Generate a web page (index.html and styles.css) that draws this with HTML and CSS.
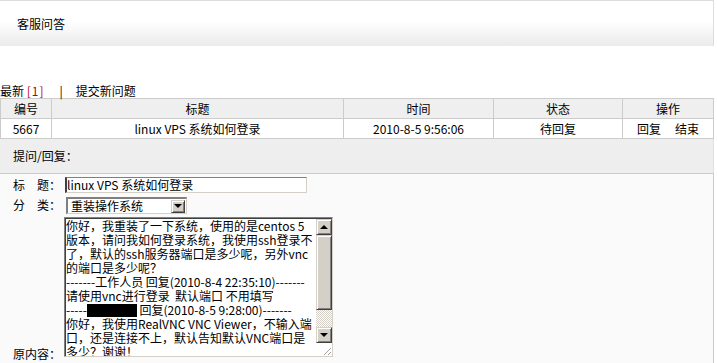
FILE: index.html
```html
<!DOCTYPE html>
<html>
<head>
<meta charset="utf-8">
<link rel="stylesheet" href="styles.css">
</head>
<body>
<div class="page">
  <div class="header"><span class="header-title">客服问答</span></div>
  <div class="tabs">最新 <span class="count">[1]</span><span class="sep">|</span>提交新问题</div>
  <table class="list">
    <tr class="head">
      <td class="c1">编号</td><td class="c2">标题</td><td class="c3">时间</td><td class="c4">状态</td><td class="c5">操作</td>
    </tr>
    <tr>
      <td>5667</td><td>linux VPS 系统如何登录</td><td>2010-8-5 9:56:06</td><td>待回复</td><td>回复<span class="gap"></span>结束</td>
    </tr>
  </table>
  <div class="panel">提问/回复：</div>
  <div class="form">
    <div class="label">标　题：</div>
    <div class="field"><div class="input">linux VPS 系统如何登录</div></div>
    <div class="label">分　类：</div>
    <div class="field"><div class="select"><span class="sel-text">重装操作系统</span><span class="sel-btn"><span class="arrow-down"></span></span></div></div>
    <div class="label bottom">原内容：</div>
    <div class="field">
      <div class="textarea">
        <div class="ta-text">你好，我重装了一下系统，使用的是centos 5
版本，请问我如何登录系统，我使用ssh登录不
了，默认的ssh服务器端口是多少呢，另外vnc
的端口是多少呢？
-------工作人员 回复(2010-8-4 22:35:10)-------
请使用vnc进行登录  默认端口 不用填写
-----<span class="redact"></span> 回复(2010-8-5 9:28:00)-------
你好，我使用RealVNC VNC Viewer，不输入端
口，还是连接不上，默认告知默认VNC端口是
多少？谢谢！</div>
        <div class="sb-col">
          <div class="sb">
            <div class="sb-btn"><span class="arrow-up"></span></div>
            <div class="sb-thumb"></div>
            <div class="sb-track"></div>
            <div class="sb-btn"><span class="arrow-down"></span></div>
          </div>
          <div class="corner">
            <svg width="12" height="12" viewBox="0 0 12 12"><path d="M11 4 L4 11 M11 8 L8 11" stroke="#a0a0a0" stroke-width="1" fill="none"/></svg>
          </div>
        </div>
      </div>
    </div>
  </div>
</div>
</body>
</html>
```
FILE: styles.css
```css
html, body {
  margin: 0;
  padding: 0;
  background: #fff;
}
body {
  font-family: "Noto Sans CJK SC", "Liberation Sans", sans-serif;
  font-size: 12px;
  color: #000;
}
.page {
  width: 714px;
}
.header {
  border-top: 1px solid #dcdcdc;
  border-right: 1px solid #dcdcdc;
  background: linear-gradient(#ffffff 0%, #ffffff 45%, #ebebeb 100%);
  display: flex;
  align-items: center;
  padding-left: 17px;
  box-sizing: border-box;
  height: 46px;
}
.header-title {
  line-height: 14px;
  margin-top: 1px;
}
.tabs {
  margin-top: 37px;
  height: 15px;
  line-height: 15px;
}
.count {
  color: #c00000;
  letter-spacing: 1px;
}
.sep {
  display: inline-block;
  margin: 0 13px 0 15px;
}
.list {
  border-collapse: collapse;
  width: 714px;
  table-layout: fixed;
}
.list td {
  border: 1px solid #cccccc;
  height: 19px;
  padding: 0;
  line-height: 19px;
  text-align: center;
}
.list .head td {
  background: #efefef;
}
.c1 { width: 50px; }
.c2 { width: 291px; }
.c3 { width: 149px; }
.c4 { width: 128px; }
.gap {
  display: inline-block;
  width: 14px;
}
.panel {
  background: #eeeeee;
  height: 34px;
  line-height: 34px;
  padding-left: 13px;
  border-right: 1px solid #e0e0e0;
}
.form {
  border-top: 1px solid #cccccc;
  border-right: 1px solid #cccccc;
  background: #fafafa;
  display: grid;
  grid-template-columns: 64px 1fr;
  padding-top: 3px;
  padding-bottom: 10px;
  row-gap: 3px;
}
.label {
  padding-left: 13px;
  align-self: center;
  line-height: 16px;
  white-space: nowrap;
}
.label.bottom {
  align-self: end;
  line-height: 14px;
  margin-bottom: -4px;
}
.field {
  display: flex;
}
.input {
  width: 242px;
  height: 16px;
  box-sizing: border-box;
  background: #fff;
  border-top: 1px solid #808080;
  border-left: 2px solid #404040;
  border-right: 1px solid #d4d0c8;
  border-bottom: 1px solid #d4d0c8;
  line-height: 14px;
  margin-left: 1px;
  white-space: nowrap;
  overflow: hidden;
}
.select {
  margin-left: 2px;
  width: 121px;
  height: 17px;
  box-sizing: border-box;
  background: #fff;
  border-top: 2px solid #808080;
  border-left: 2px solid #808080;
  border-right: 1px solid #d4d0c8;
  border-bottom: 1px solid #d4d0c8;
  display: flex;
  align-items: center;
  justify-content: space-between;
  margin-top: 1px;
}
.sel-text {
  padding-left: 3px;
  line-height: 14px;
}
.sel-btn {
  width: 14px;
  height: 13px;
  box-sizing: border-box;
  background: #d4d0c8;
  border: 1px solid;
  border-color: #d4d0c8 #404040 #404040 #d4d0c8;
  box-shadow: inset 1px 1px #fff, inset -1px -1px #808080;
  display: flex;
  align-items: center;
  justify-content: center;
  margin-right: 1px;
}
.arrow-down {
  width: 0;
  height: 0;
  border-left: 4px solid transparent;
  border-right: 4px solid transparent;
  border-top: 4px solid #000;
}
.arrow-up {
  width: 0;
  height: 0;
  border-left: 4px solid transparent;
  border-right: 4px solid transparent;
  border-bottom: 4px solid #000;
}
.textarea {
  width: 269px;
  height: 140px;
  box-sizing: border-box;
  background: #fff;
  border-top: 1px solid #808080;
  border-left: 1px solid #808080;
  border-right: 1px solid #d4d0c8;
  border-bottom: 1px solid #d4d0c8;
  box-shadow: inset 1px 1px #404040;
  display: flex;
  padding: 1px 0 0 1px;
}
.ta-text {
  width: 250px;
  white-space: pre;
  overflow: hidden;
  line-height: 14px;
}
.redact {
  display: inline-block;
  width: 50px;
  height: 13px;
  background: #000;
  vertical-align: -2px;
}
.sb-col {
  width: 16px;
  display: flex;
  flex-direction: column;
}
.sb {
  height: 124px;
  display: flex;
  flex-direction: column;
}
.sb-btn {
  height: 16px;
  box-sizing: border-box;
  background: #d4d0c8;
  border: 1px solid;
  border-color: #d4d0c8 #404040 #404040 #d4d0c8;
  box-shadow: inset 1px 1px #fff, inset -1px -1px #808080;
  display: flex;
  align-items: center;
  justify-content: center;
}
.sb-thumb {
  height: 75px;
  box-sizing: border-box;
  background: #d4d0c8;
  border: 1px solid;
  border-color: #d4d0c8 #404040 #404040 #d4d0c8;
  box-shadow: inset 1px 1px #fff, inset -1px -1px #808080;
}
.sb-track {
  flex: 1;
  background: repeating-conic-gradient(#ffffff 0 25%, #d4d0c8 0 50%) 0 0 / 2px 2px;
}
.corner {
  flex: 1;
  display: flex;
  align-items: flex-end;
  justify-content: flex-end;
}
.corner svg {
  display: block;
}
```
